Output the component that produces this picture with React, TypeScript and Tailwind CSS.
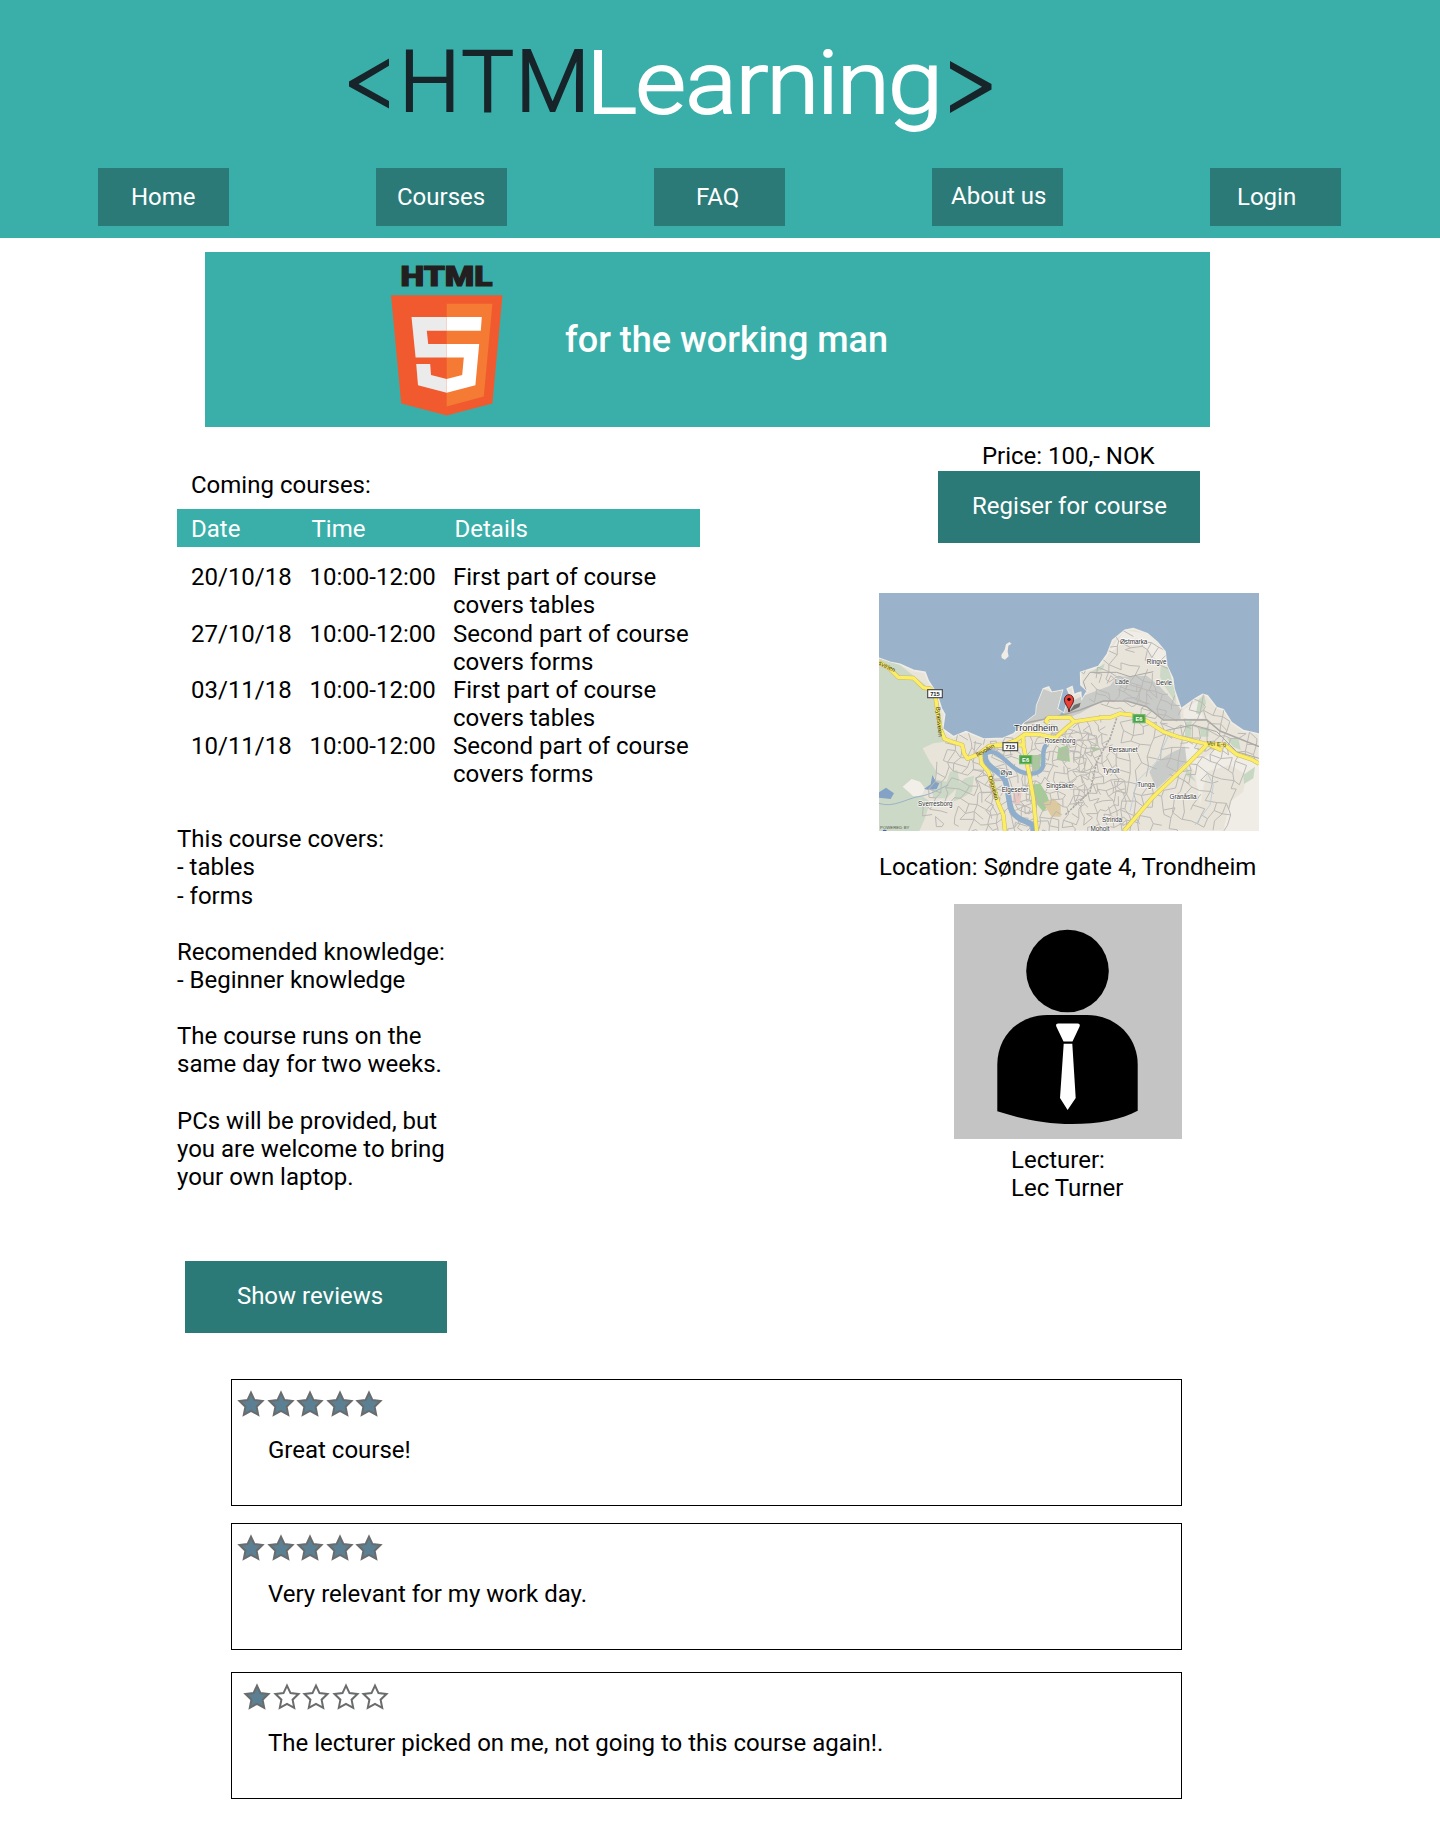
import React from 'react';

const NAV = [
  { label: 'Home', inset: 'pl-[33px] pt-[15px]' },
  { label: 'Courses', inset: 'pl-[21px] pt-[15px]' },
  { label: 'FAQ', inset: 'pl-[42px] pt-[15px]' },
  { label: 'About us', inset: 'pl-[19px] pt-[14px]' },
  { label: 'Login', inset: 'pl-[27px] pt-[15px]' },
];

const SESSIONS = [
  { date: '20/10/18', time: '10:00-12:00', details: ['First part of course', 'covers tables'] },
  { date: '27/10/18', time: '10:00-12:00', details: ['Second part of course', 'covers forms'] },
  { date: '03/11/18', time: '10:00-12:00', details: ['First part of course', 'covers tables'] },
  { date: '10/11/18', time: '10:00-12:00', details: ['Second part of course', 'covers forms'] },
];

const DESCRIPTION = [
  'This course covers:',
  '- tables',
  '- forms',
  '',
  'Recomended knowledge:',
  '- Beginner knowledge',
  '',
  'The course runs on the',
  'same day for two weeks.',
  '',
  'PCs will be provided, but',
  'you are welcome to bring',
  'your own laptop.',
];

const REVIEWS = [
  { stars: 5, text: 'Great course!', box: '', inset: 'ml-[5px]' },
  { stars: 5, text: 'Very relevant for my work day.', box: 'mt-[17px]', inset: 'ml-[5px]' },
  { stars: 1, text: 'The lecturer picked on me, not going to this course again!.', box: 'mt-[22px]', inset: 'ml-[11px]' },
];

/* Wordmark letters: character, origin x, horizontal stretch. */
const DARK_LETTERS: [string, number, number][] = [
  ['H', 399, 1.02],
  ['T', 461.2, 1.04],
  ['M', 515.5, 1.01],
];
const LIGHT_LETTERS: [string, number, number][] = [
  ['L', 586.5, 1.1],
  ['e', 635.5, 1.12],
  ['a', 685.5, 1.1],
  ['r', 735.5, 1.12],
  ['n', 766.5, 1.1],
  ['i', 817.5, 1.06],
  ['n', 837, 1.1],
  ['g', 888, 1.14],
];

function SiteLogo() {
  return (
    <svg className="block h-[168px] w-full" viewBox="0 0 1440 168" fontFamily="Roboto" fontWeight="300">
      <path d="M389 58.5V65.8L358.5 84L389 101V108.5L349 86.5V81.5ZM950 61V68.5L982 86.8L950 105.5V113L991.5 89.5V84Z" fill="#17252a" />
      <g fontSize="85" fill="#17252a" stroke="#17252a" strokeWidth="1.8">
        {DARK_LETTERS.map(([ch, x, k]) => (
          <text key={x} transform={`translate(${x} 111) scale(${k} 1)`}>{ch}</text>
        ))}
      </g>
      <g fontSize="87" fill="#ffffff" stroke="#ffffff" strokeWidth="1.9">
        {LIGHT_LETTERS.map(([ch, x, k]) => (
          <text key={x} transform={`translate(${x} 112.8) scale(${k} 1)`}>{ch}</text>
        ))}
      </g>
    </svg>
  );
}

function Html5Logo() {
  return (
    <svg className="h-[175px] w-[112px] shrink-0" viewBox="391 252 112 175">
      <text x="400.5" y="286" fontFamily="Roboto" fontWeight="900" fontSize="28.5" fill="#231f20" stroke="#231f20" strokeWidth="1.2" textLength="92" lengthAdjust="spacingAndGlyphs">HTML</text>
      <path d="M391 295.3H502.5L492.4 403.5L446.7 415.6L401.2 403.5Z" fill="#f15a2e" />
      <path d="M446.7 303.8H492.4L483.8 396.5L446.7 406.5Z" fill="#f57a33" />
      <path d="M411.5 317H446.7V330.8H426.8L428.2 344H446.7V357.6H415.6ZM416.2 364H430.2L431 375L446.7 379V392.7L418 385.3Z" fill="#ebebeb" />
      <path d="M446.7 317H481.8L480.8 330.8H446.7ZM446.7 344H479.2L475.4 385.3L446.7 392.7V379L462.2 375L463.8 357.6H446.7Z" fill="#fff" />
    </svg>
  );
}

/* Deterministic jittered street lattice inside a rectangle, rotated by `angle`. */
function streets(seed: number, x: number, y: number, w: number, h: number, step: number, angle: number) {
  let s = seed;
  const rnd = () => {
    s = (s * 16807) % 2147483647;
    return s / 2147483647;
  };
  const cols = Math.ceil(w / step);
  const rows = Math.ceil(h / step);
  const a = (angle * Math.PI) / 180;
  const cx = x + w / 2;
  const cy = y + h / 2;
  const pts: [number, number][][] = [];
  for (let r = 0; r <= rows; r++) {
    pts.push([]);
    for (let c = 0; c <= cols; c++) {
      const px = c * step - w / 2 + (rnd() - 0.5) * step * 0.75;
      const py = r * step - h / 2 + (rnd() - 0.5) * step * 0.75;
      pts[r].push([cx + px * Math.cos(a) - py * Math.sin(a), cy + px * Math.sin(a) + py * Math.cos(a)]);
    }
  }
  let d = '';
  const seg = (p: [number, number], q: [number, number]) => {
    d += `M${p[0].toFixed(1)} ${p[1].toFixed(1)}L${q[0].toFixed(1)} ${q[1].toFixed(1)}`;
  };
  for (let r = 0; r <= rows; r++) {
    for (let c = 0; c <= cols; c++) {
      if (c < cols && rnd() < 0.66) seg(pts[r][c], pts[r][c + 1]);
      if (r < rows && rnd() < 0.66) seg(pts[r][c], pts[r + 1][c]);
    }
  }
  return d;
}

const MINOR = [
  streets(11, 190, 470, 180, 260, 25, 20),
  streets(23, 340, 540, 130, 200, 23, -15),
  streets(37, 460, 430, 180, 310, 19, 12),
  streets(41, 600, 410, 150, 330, 19, -20),
  streets(59, 740, 420, 200, 310, 30, 8),
  streets(67, 650, 150, 240, 150, 27, 25),
  streets(71, 940, 480, 150, 240, 27, 20),
  streets(83, 950, 350, 210, 130, 25, 15),
  streets(97, 660, 300, 260, 80, 21, 18),
  streets(101, 300, 455, 150, 60, 20, 5),
];

const COAST =
  'M27 220L60 232L90 238L130 256L165 262L175 288L200 326L214 370L224 388L218 432L250 455L288 440L340 462L400 460L432 446L462 415L498 388L500 362L520 312L536 306L545 322L577 316L562 372L582 385L600 330L592 312L606 305L612 330L622 325L632 322L634 348L652 318L633 300L632 262L685 245L712 208L728 166L765 136L790 131L832 146L862 172L885 200L890 242L908 280L912 312L933 372L975 342L998 328L1012 332L1040 368L1060 374L1084 412L1120 437L1167 447V738H27Z';

const MAIN_ROADS = [
  'M27 232L58 250L85 277L130 279L160 308L184 312L197 340L203 380L212 435L224 462L245 470L277 480L282 505L292 521L325 508L358 483L400 480L440 465L465 447L510 449L556 459L590 428L612 410L700 397L722 397L750 386L785 390L830 408L880 440L925 456L1010 477L1065 480L1100 508L1145 523L1167 536',
  'M1010 480L950 540L850 635L762 738',
  'M332 510L334 535L355 560L375 620L385 655L400 690L405 738',
  'M459 450L460 480L478 570L490 640L500 738',
  'M375 480H460',
  'M612 410L600 397L535 398L528 408L535 414',
  'M1015 477L1055 496',
];

function Label({ x, y, size = 19, children }: { x: number; y: number; size?: number; children: string }) {
  return (
    <text x={x} y={y} fontSize={size} textAnchor="middle" fill="#333333" stroke="#ffffff" strokeWidth="5" strokeOpacity="0.85" paintOrder="stroke" strokeLinejoin="round">
      {children}
    </text>
  );
}

function Shield({ x, y, w, h = 24, green, children }: { x: number; y: number; w: number; h?: number; green?: boolean; children: string }) {
  return (
    <g>
      <rect x={x} y={y} width={w} height={h} fill={green ? '#4ba145' : '#ffffff'} stroke={green ? '#6db867' : '#4a4a4a'} strokeWidth="3.5" />
      <text x={x + w / 2} y={y + h / 2 + 6} fontSize="17.5" fontWeight="700" textAnchor="middle" fill={green ? '#ffffff' : '#222222'}>
        {children}
      </text>
    </g>
  );
}

function LocationMap() {
  return (
    <svg className="block h-[238px] w-[380px]" viewBox="27 24 1140 714" preserveAspectRatio="none" fontFamily="Liberation Sans">
      <defs>
        <clipPath id="land">
          <path d={COAST} />
        </clipPath>
        <path id="bynesveien" d="M198 366L206 460" />
        <path id="osloveien" d="M355 574L376 650" />
        <path id="ilevollen" d="M322 515L380 484" />
        <path id="west" d="M24 238L76 264" />
      </defs>
      <rect x="27" y="24" width="1140" height="714" fill="#9ab3ca" />
      <path d={COAST} fill="#e8e4da" stroke="#f0ece6" strokeWidth="5" />
      <g clipPath="url(#land)">
        <path d="M27 220L90 240L165 300L190 330L210 440L225 470L190 475L158 490L180 530L200 560L185 600L140 620L180 650L165 700L148 738H27Z" fill="#ccd9c6" />
        <path d="M180 580L230 590L240 560L262 555L270 600L230 640L190 640Z" fill="#ccd9c6" />
        <path d="M285 580L312 572L306 620L275 640L250 650L262 600Z" fill="#ccd9c6" />
        <path d="M98 605L125 582L150 590L165 610L155 632L130 634Z" fill="#f2efe9" />
        <path d="M27 622L48 608L72 625L62 642L27 638ZM162 612L182 598L187 570L198 590L208 595L200 612L178 615Z" fill="#84a2c6" />
        <path d="M27 655C70 670 110 640 150 634C185 628 200 615 235 600" fill="none" stroke="#9ab3ca" strokeWidth="3" />
        <path d="M940 375L985 345L1000 400L960 400L958 450L1000 520L1060 470L1167 540V738H1060L1080 650L1120 620L1130 570L1080 540L1010 560L990 660L975 560L945 520Z" fill="#f0ece6" />
        <path d="M712 208L765 136L832 146L885 200L890 245L860 225L800 160L750 180Z" fill="#f0ece6" />
        <path d="M632 335L720 302L740 275L830 272L870 305L930 370L932 405L880 402L830 365L760 345L690 350L630 385L590 400L560 392L470 420L462 410L520 312L545 322L577 316L562 372Z" fill="#c9cbc9" />
        <path d="M838 560L860 530L910 500L945 485L950 530L905 570L860 612Z" fill="#c9cbc9" />
        <path d="M872 245L895 245L915 320L918 355L885 305L870 275Z" fill="#ccd9c6" />
        <path d="M985 345L1003 330L1008 355L990 390L978 385ZM945 410L965 408L962 455L945 455ZM990 430L1018 425L1015 455H992ZM1070 460L1105 458L1112 495L1090 485ZM1120 570L1155 545L1150 580L1122 597ZM945 540L978 590L948 570ZM662 262L705 235L698 255Z" fill="#c6d8c2" />
        <path d="M484 600L510 595L530 628L540 655L520 680L498 655ZM565 490L595 480L600 530L560 525ZM478 510L514 510L510 550L490 560ZM585 495L598 505L590 515H585ZM660 485L690 490L672 500Z" fill="#a5cc96" />
        <path d="M520 655L550 640L572 660V695H545Z" fill="#dcc9a0" />
        <path d="M430 620L455 622L450 660L428 655Z" fill="#e7c6c4" />
        <g fill="none" stroke="#bcb9b5" strokeWidth="3">
          {MINOR.map((d, i) => (
            <path key={i} d={d} />
          ))}
        </g>
        <g fill="none" stroke="#aaa8a5" strokeWidth="4.5">
          <path d="M462 415L560 395L630 375L700 348L770 348L830 365L880 405L1010 404L1050 438L1167 485" />
          <path d="M740 400L720 460L680 530L660 620L585 690" strokeDasharray="7 3" />
          <path d="M650 322L640 290L660 262L740 262L780 275L850 260" strokeWidth="3" />
          <path d="M870 440L970 420L1040 440L1100 500L1167 520" strokeWidth="3" />
        </g>
        <g fill="none" stroke="#8faecb" strokeLinejoin="round">
          <path d="M345 505C340 545 385 555 402 580C418 605 412 660 430 685C450 710 475 708 490 722V738" strokeWidth="17" />
          <path d="M345 508C370 485 398 520 428 545C460 572 505 572 517 548C525 525 512 495 530 478" strokeWidth="13" />
          <path d="M525 415L528 400L565 400L580 385" strokeWidth="9" />
          <path d="M905 430L860 530L800 590L780 680M1010 560L1030 600L1020 660L975 720" strokeWidth="2.5" stroke="#b8cbd9" />
        </g>
        <g fill="none" stroke="#cdb95a" strokeWidth="13" strokeLinejoin="round">
          {MAIN_ROADS.map((d) => (
            <path key={d} d={d} />
          ))}
        </g>
        <g fill="none" stroke="#fbee66" strokeWidth="10" strokeLinejoin="round">
          {MAIN_ROADS.map((d) => (
            <path key={d} d={d} />
          ))}
        </g>
      </g>
      <path d="M394 210L404 194L408 178L418 171L425 176L415 182L413 200L416 214L405 224L395 219Z" fill="#f0ece6" />
      <g fontSize="18" fill="#3f3b1c">
        <text><textPath href="#bynesveien" textLength="90">Bynesveien</textPath></text>
        <text><textPath href="#osloveien" textLength="75">Osloveien</textPath></text>
        <text><textPath href="#ilevollen" textLength="60">Ilevollen</textPath></text>
        <text><textPath href="#west" textLength="54">sveien</textPath></text>
        <text x="1010" y="481" transform="rotate(4 1010 481)">Vei E-6</text>
      </g>
      <Shield x={173} y={314} w={44}>715</Shield>
      <Shield x={399} y={473} w={44}>715</Shield>
      <Shield x={449} y={512} w={36} green>E6</Shield>
      <Shield x={789} y={389} w={36} green>E6</Shield>
      <Label x={498} y={437} size={28}>Trondheim</Label>
      <Label x={570} y={475}>Rosenborg</Label>
      <Label x={409} y={571}>Øya</Label>
      <Label x={435} y={622}>Elgeseter</Label>
      <Label x={570} y={608}>Singsaker</Label>
      <Label x={196} y={662}>Sverresborg</Label>
      <Label x={791} y={176}>Østmarka</Label>
      <Label x={860} y={238}>Ringve</Label>
      <Label x={756} y={296}>Lade</Label>
      <Label x={882} y={300}>Devle</Label>
      <Label x={759} y={501}>Persaunet</Label>
      <Label x={723} y={565}>Tyholt</Label>
      <Label x={828} y={605}>Tunga</Label>
      <Label x={939} y={643}>Granåslia</Label>
      <Label x={726} y={711}>Strinda</Label>
      <Label x={690} y={739}>Moholt</Label>
      <text x="30" y="731" fontSize="12.5" fill="#4d564c" textLength="88">POWERED BY</text>
      <path d="M38 738A6 4 0 0 1 50 738Z" fill="#3f66c4" />
      <path d="M598 381L612 360L632 353L628 366Z" fill="#333" fillOpacity="0.6" />
      <path d="M597 381C596 364 583 358 583 345A14 16 0 0 1 611 345C611 358 598 364 597 381Z" fill="#ee4037" stroke="#3a1210" strokeWidth="2.5" />
      <circle cx="597" cy="343" r="5" fill="#1c0505" />
    </svg>
  );
}

function LecturerPortrait() {
  return (
    <svg className="ml-[75px] block h-[235px] w-[228px] bg-[#c4c4c4]" viewBox="0 0 228 235">
      <circle cx="113.5" cy="67" r="41.3" />
      <path d="M43.3 207.3V160.5C43.3 133 64 111 93.5 111H133C162 111 183.7 133 183.7 160.5V206.7C168 215.5 144 220 118 220C91 220 66 214.5 43.3 207.3Z" />
      <path d="M104.3 119.5H123.5Q126.5 119.5 125.6 122.4L118.5 137.6H109.5L102.3 122.4Q101.3 119.5 104.3 119.5ZM109.7 139.8H118.3L121.7 194L113.6 206L106 194Z" fill="#fff" />
    </svg>
  );
}

function Star({ filled }: { filled: boolean }) {
  return (
    <svg className="h-[27px] w-[29.6px]" viewBox="0 0 29.6 27">
      <path
        d="M14 2.6L17.5 10.1L25.5 11L19.6 16.7L21.2 24.8L14 20.8L6.8 24.8L8.4 16.7L2.5 11L10.5 10.1Z"
        fill={filled ? '#5b8094' : '#ffffff'}
        stroke="#6a6b6c"
        strokeWidth="2"
      />
    </svg>
  );
}

export default function App() {
  return (
    <div className="min-h-[1847px] w-[1440px] bg-white font-['Roboto',sans-serif] text-[24px] leading-[28.125px] text-black">
      <header className="h-[238px] bg-[#3aafa9]">
        <SiteLogo />
        <nav className="flex gap-[147px] pl-[98px] text-white">
          {NAV.map((item) => (
            <a key={item.label} className={`h-[58px] w-[131px] whitespace-nowrap bg-[#2b7a78] ${item.inset}`}>
              {item.label}
            </a>
          ))}
        </nav>
      </header>

      <section className="mt-[14px] ml-[205px] flex h-[175px] w-[1005px] bg-[#3aafa9] pl-[186px]">
        <Html5Logo />
        <h1 className="mt-[67px] ml-[62px] text-[36px] leading-[42px] font-medium whitespace-nowrap text-white">for the working man</h1>
      </section>

      <main className="flex h-[906px] pl-[177px]">
        <div className="w-[702px] pt-[44px]">
          <h2 className="h-[38px] pl-[14px]">Coming courses:</h2>
          <div className="grid h-[38px] w-[523px] grid-cols-[120.5px_143px_1fr] bg-[#3aafa9] pt-[6px] pl-[14px] text-white">
            <span>Date</span>
            <span>Time</span>
            <span>Details</span>
          </div>
          <div className="mt-[16.3px] h-[225px] w-[523px] pl-[14px]">
            {SESSIONS.map((s) => (
              <div key={s.date} className="grid grid-cols-[118.5px_143.5px_1fr] whitespace-nowrap">
                <span>{s.date}</span>
                <span>{s.time}</span>
                <span>
                  {s.details[0]}
                  <br />
                  {s.details[1]}
                </span>
              </div>
            ))}
          </div>
          <p className="mt-[37px] h-[435.7px] whitespace-pre">{DESCRIPTION.join('\n')}</p>
          <button className="ml-[8px] block h-[72px] w-[262px] bg-[#2b7a78] pr-[12px] pb-[1px] text-center text-white">Show reviews</button>
        </div>

        <aside className="w-[380px] pt-[15px]">
          <p className="h-[29px] pr-[1.5px] text-center">Price: 100,- NOK</p>
          <button className="mx-auto block h-[72px] w-[262px] bg-[#2b7a78] pb-[2px] pl-[1px] text-center text-white">Regiser for course</button>
          <div className="mt-[50px]">
            <LocationMap />
          </div>
          <p className="mt-[22px] h-[51px] whitespace-nowrap">Location: Søndre gate 4, Trondheim</p>
          <LecturerPortrait />
          <p className="mt-[7px] ml-[132px]">
            Lecturer:
            <br />
            Lec Turner
          </p>
        </aside>
      </main>

      <section className="mt-[46px] ml-[231px] w-[951px]">
        {REVIEWS.map((r) => (
          <article key={r.text} className={`h-[127px] border border-black pt-[10px] ${r.box}`}>
            <div className={`flex ${r.inset}`}>
              {[0, 1, 2, 3, 4].map((i) => (
                <Star key={i} filled={i < r.stars} />
              ))}
            </div>
            <p className="mt-[19px] ml-[36px]">{r.text}</p>
          </article>
        ))}
      </section>
    </div>
  );
}
